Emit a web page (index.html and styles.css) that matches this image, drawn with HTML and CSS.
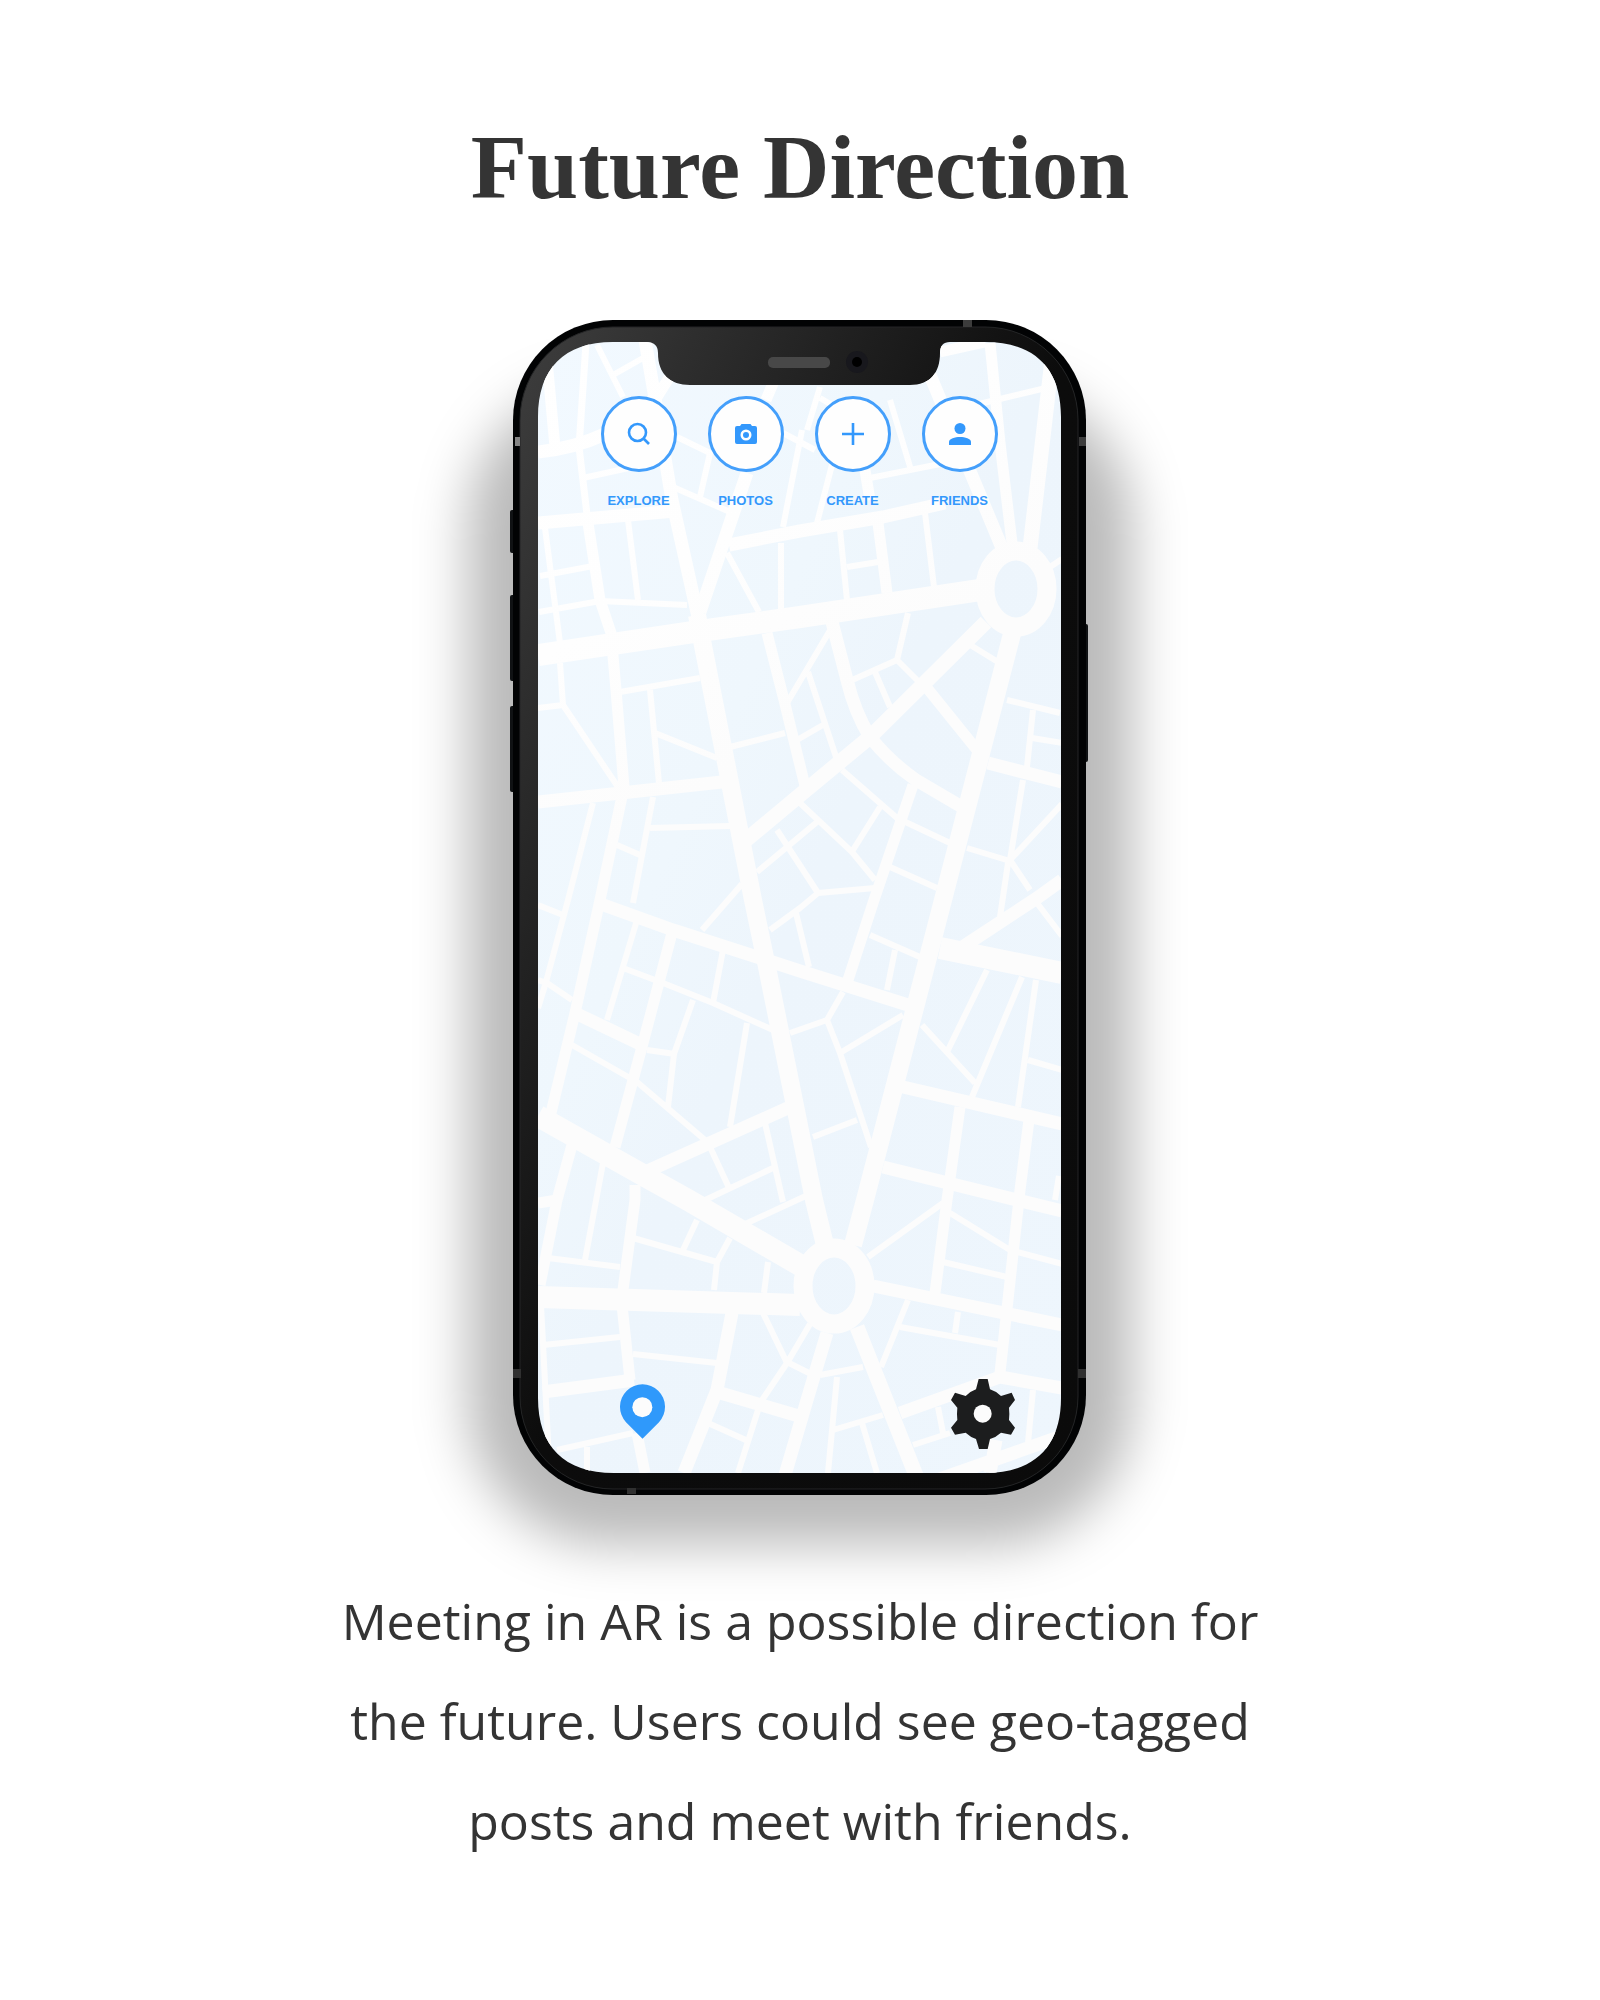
FILE: index.html
```html
<!DOCTYPE html>
<html lang="en">
<head>
<meta charset="utf-8">
<meta name="viewport" content="width=device-width, initial-scale=1">
<title>Future Direction</title>
<link rel="stylesheet" href="styles.css">
</head>
<body>
<main class="page">
  <h1 class="title">Future Direction</h1>

  <section class="phone" aria-label="App preview">
    <svg class="phone-art" viewBox="500 310 600 1200" aria-hidden="true">
      <defs>
        <linearGradient id="bezel" x1="0" y1="0" x2="1" y2="1">
          <stop offset="0" stop-color="#3e3e3e"/>
          <stop offset=".28" stop-color="#222"/>
          <stop offset=".5" stop-color="#0c0c0c"/>
          <stop offset="1" stop-color="#0b0b0b"/>
        </linearGradient>
        <linearGradient id="land" x1="0" y1="0" x2="1" y2="1">
          <stop offset="0" stop-color="#f2f9ff"/>
          <stop offset=".35" stop-color="#eff7fd"/>
          <stop offset=".5" stop-color="#edf5fc"/>
          <stop offset="1" stop-color="#eef6fd"/>
        </linearGradient>
        <linearGradient id="road" gradientUnits="userSpaceOnUse" x1="538" y1="342" x2="900" y2="900">
          <stop offset="0" stop-color="#ffffff"/>
          <stop offset=".4" stop-color="#fefefe"/>
          <stop offset=".7" stop-color="#fcfcfc"/>
        </linearGradient>
        <filter id="soft" x="-40%" y="-20%" width="180%" height="140%">
          <feGaussianBlur stdDeviation="26"/>
        </filter>
        <path id="glass" d="M613 342H646Q658 342 658 353C658 374 670 385 690 385H910C930 385 940 373 940 353Q940 342 950 342H985C1035 342 1061 369 1061 417V1398C1061 1446 1035 1473 985 1473H614C564 1473 538 1446 538 1398V417C538 369 564 342 613 342Z"/>
        <clipPath id="screen"><use href="#glass"/></clipPath>
      </defs>

      <rect x="468" y="385" width="664" height="1160" rx="140" fill="#000" fill-opacity=".27" filter="url(#soft)"/>

      <g fill="#101214">
        <rect x="510" y="510" width="8" height="43" rx="2"/>
        <rect x="510" y="595" width="8" height="86" rx="2"/>
        <rect x="510" y="706" width="8" height="86" rx="2"/>
        <rect x="1081" y="624" width="7" height="138" rx="2"/>
      </g>
      <rect x="513" y="320" width="573" height="1175" rx="100" fill="#020304"/>
      <rect x="520" y="327" width="558" height="1162" rx="93" fill="url(#bezel)" stroke="#242526"/>
      <g fill="#3c3c3c">
        <rect x="515" y="437" width="5" height="9" fill="#858585"/>
        <rect x="1079" y="437" width="7" height="9"/>
        <rect x="963" y="320" width="9" height="7"/>
        <rect x="513" y="1369" width="8" height="9" fill="#303030"/>
        <rect x="1078" y="1369" width="8" height="9" fill="#303030"/>
        <rect x="627" y="1488" width="9" height="6" fill="#303030"/>
      </g>

      <use href="#glass" fill="url(#land)"/>
      <g clip-path="url(#screen)" fill="none" stroke="url(#road)" stroke-linejoin="round">
        <!-- lanes -->
        <g stroke-width="6">
          <path d="M597 345L623 397M613 375L643 358M583 478L633 467M677 437L710 453L700 497M673 487L730 512M783 433L815 450M802 430L783 527M781 543L781 612M727 553L759 612M540 576L593 566M628 520L638 600M539 612L600 601L687 605M545 528L560 643"/>
          <path d="M820 387L807 430M820 398L837 408M834 457L817 523M890 400L911 470M870 478L945 463M975 405L1050 387M840 530L847 600M847 567L878 562M925 513L934 587M1050 567L1062 559"/>
          <path d="M560 663L563 705L618 787M538 708L563 705M620 692L700 678M650 690L659 783M655 733L717 758M730 747L785 733M787 703L832 627M797 740L823 725M808 672L837 760M593 803L568 900L546 982L538 1008M653 797L633 903M617 845L640 855M650 828L730 826M757 872L817 822M777 830L788 847L818 893M742 884L702 930"/>
          <path d="M908 613L897 660L920 683M850 681L897 660M875 672L890 707M967 643L998 662M1007 700L1060 713M1033 710L1027 767M1032 738L1062 743M842 770L897 818L950 843M880 807L853 850M800 803L852 852L875 880M890 867L937 888M770 930L800 908L818 893L875 888M967 848L1010 861M1023 780L1010 860L1062 804M1010 860L1030 890M1008 863L1000 917"/>
          <path d="M796 913L809 967M870 935L920 957M895 950L887 990M843 992L827 1020L790 1033M827 1020L840 1053L871 1147M840 1053L903 1015M813 1137L857 1120M922 1025L975 1083M987 970L947 1052M1022 977L972 1097M1036 980L1018 1107M1028 1060L1062 1070M1037 903L1062 936M1059 1176L1055 1200"/>
          <path d="M538 905L563 915M538 980L547 983L572 1000M637 920L607 1020M623 968L663 983L713 1003L773 1030M693 1000L674 1054L668 1107M647 1050L675 1054M723 950L713 1003M747 1023L730 1127M572 1045L637 1082L705 1140M710 1147L730 1190M703 1201L773 1168M765 1123L783 1202M743 1225L810 1194M603 1163L585 1260"/>
          <path d="M548 1258L620 1267M633 1238L717 1262L714 1290M697 1220L683 1250M730 1238L717 1262M768 1262L764 1293M543 1345L620 1337M633 1354L717 1363M763 1313L787 1363L760 1403M787 1362L817 1377M810 1324L787 1363M758 1410L738 1473M708 1423L748 1441M557 1450L633 1433M587 1447V1473"/>
          <path d="M868 1257L943 1203M950 1213L1010 1250L1062 1264M943 1262L1007 1277M908 1300L881 1367M900 1327L1000 1345M958 1312L955 1333M820 1375L863 1367M837 1377L828 1473M833 1430L883 1415M862 1423L877 1473M913 1445L950 1433M938 1407L943 1433M1033 1390L1028 1443"/>
        </g>
        <!-- streets -->
        <g stroke-width="11">
          <path d="M586 343L579 447L588 523" stroke-width="7"/>
          <path d="M547 360L555 447M588 523L600 600L611 633L616 690L624 787L600 900L575 1013L551 1113M657 397L677 365M865 470L870 500M878 523L887 593M990 343L1000 443L1012 543M767 633L784 700L806 790M630 1380L622 1305M637 1433L645 1473"/>
          <path d="M672 933L643 1043L615 1147M635 1185L635 1200L623 1290M572 1145L557 1200L540 1285M960 1107L947 1200L935 1293M1029 1120L1020 1190L1000 1373M923 683L977 750M913 785L874 900L848 980"/>
          <path d="M541 1305L549 1460" stroke-width="6"/>
          <path d="M538 1203L557 1200M779 369L766 400M940 352L985 342"/>
        </g>
        <g stroke-width="13">
          <path d="M538 452Q575 448 605 434M538 523L675 511M700 612L747 473M729 545L800 531L883 517L945 503M538 802L722 782M832 622L847 680Q855 713 870 737Q890 762 916 780L962 807M988 763L1062 782M598 903L673 930L757 957L800 971L908 1005M575 1013L642 1045M643 1173L790 1107M903 1087L1062 1124M883 1167L1062 1211M873 1286L1062 1325M961 948L1037 898L1062 880"/>
          <path d="M827 1333L807 1400L785 1475M717 1392L802 1417M732 1313L717 1390L684 1473M543 1392L634 1380M900 1413L1000 1377L1062 1388M940 1479L1062 1436M996 1440L990 1473"/>
        </g>
        <!-- avenues -->
        <path stroke-width="13" d="M645 340L657 410L672 500L702 635M930 375L1002 548"/>
        <path stroke-width="15" d="M1052 360L1030 548M986 622L870 737L800 795L746 840M857 1327L917 1478"/>
        <path stroke-width="18" d="M697 615L753 900L767 967L814 1200L825 1245M1013 630L943 900L917 1000L865 1200L853 1245"/>
        <path stroke-width="22" d="M538 655L700 631L800 617L980 590M538 1297L800 1305M538 1116L643 1175L688 1200L805 1268M940 948L1062 973"/>
        <!-- roundabouts -->
        <ellipse cx="1016" cy="589" rx="31" ry="38" stroke-width="19"/>
        <ellipse cx="834" cy="1286" rx="31" ry="38" stroke-width="19"/>
      </g>

      <rect x="768" y="357" width="62" height="11" rx="5" fill="#484848"/>
      <circle cx="857" cy="362" r="11" fill="#18181d"/>
      <circle cx="857" cy="362" r="5" fill="#000"/>
    </svg>

    <div class="app">
      <nav class="actions" aria-label="Main">
        <button class="action" type="button">
          <span class="disc"><svg viewBox="0 0 24 24" class="glyph"><g fill="none" stroke="currentColor" stroke-width="2.600"><circle cx="10.500" cy="10.500" r="8.500"/><path d="M16 16L22 22"/></g></svg></span>
          <span class="label">EXPLORE</span>
        </button>
        <button class="action" type="button">
          <span class="disc"><svg viewBox="0 0 24 24" class="glyph"><path fill="currentColor" fill-rule="evenodd" d="M3 4H6L7.500 2H16.500L18 4H21Q23 4 23 6V20Q23 22 21 22H3Q1 22 1 20V6Q1 4 3 4ZM12 7.500A5.500 5.500 0 1 0 12 18.500A5.500 5.500 0 1 0 12 7.500Z"/><circle cx="12" cy="13" r="3" fill="currentColor"/></svg></span>
          <span class="label">PHOTOS</span>
        </button>
        <button class="action" type="button">
          <span class="disc"><svg viewBox="0 0 24 24" class="glyph"><path fill="none" stroke="currentColor" stroke-width="2.600" d="M12 1V23M1 12H23"/></svg></span>
          <span class="label">CREATE</span>
        </button>
        <button class="action" type="button">
          <span class="disc"><svg viewBox="0 0 24 24" class="glyph"><circle cx="12" cy="6.500" r="5.500" fill="currentColor"/><path fill="currentColor" d="M1 23V20C1 16.500 7 15 12 15S23 16.500 23 20V23Z"/></svg></span>
          <span class="label">FRIENDS</span>
        </button>
      </nav>

      <div class="tools">
        <button class="tool tool-locate" type="button" aria-label="My location">
          <svg class="pin" viewBox="0 0 135 164"><path fill="#2f99fb" d="M67.500 164L18 114A67.500 67.500 0 1 1 117 114Z"/><circle cx="67" cy="69" r="30" fill="#fcfcfc"/></svg>
        </button>
        <button class="tool" type="button" aria-label="Settings">
          <svg class="gear" viewBox="0 0 192 210"><path fill="#1c1d1e" d="M83 0H110L117 31Q136 37 150 51L182 41L192 63L174 86Q176 104 174 123L192 146L180 167L150 161Q136 174 117 180L110 210H84L75 180Q58 174 44 161L12 167L0 146L19 123Q17 104 19 86L0 63L12 41L44 51Q58 37 75 31Z"/><circle cx="95" cy="104" r="27" fill="#fcfcfc"/></svg>
        </button>
      </div>
    </div>
  </section>

  <p class="summary">Meeting in AR is a possible direction for the future. Users could see geo-tagged posts and meet with friends.</p>
</main>
</body>
</html>
```
FILE: styles.css
```css
* {
  box-sizing: border-box;
}

body {
  margin: 0;
  background: #fff;
  color: #343434;
}

.page {
  display: flex;
  flex-direction: column;
  align-items: center;
  min-height: 100vh;
  padding: 117px 24px 96px;
}

.title {
  margin: 0 0 93px;
  font: bold 92px/100px "Liberation Serif", serif;
  text-align: center;
}

.phone {
  display: grid;
  width: 600px;
}

.phone-art,
.app {
  grid-area: 1 / 1;
}

.phone-art {
  display: block;
  width: 100%;
  overflow: visible;
}

.app {
  position: relative;
  display: flex;
  flex-direction: column;
  justify-content: space-between;
  padding: 86px 85px 61px 101px;
}

button {
  padding: 0;
  border: 0;
  background: none;
  cursor: pointer;
}

.actions {
  display: flex;
  gap: 32px;
}

.action {
  display: flex;
  flex-direction: column;
  align-items: center;
  gap: 21px;
  width: 75px;
  color: #3398fc;
}

.disc {
  display: grid;
  place-items: center;
  width: 76px;
  height: 76px;
  border: 3px solid #449ffb;
  border-radius: 50%;
  background: #fefefe;
}

.glyph {
  width: 24px;
  height: 24px;
}

.label {
  font: bold 13px/16px "Liberation Sans", sans-serif;
}

.tools {
  display: flex;
  align-items: center;
  justify-content: space-between;
  padding-left: 19px;
}

.tool svg {
  display: block;
}

.tool-locate {
  padding-bottom: 5px;
}

.pin {
  width: 45px;
  height: 55px;
}

.gear {
  width: 64px;
  height: 70px;
}

.summary {
  max-width: 960px;
  margin: 61px 0 0;
  font: 50px/100px "Open Sans", sans-serif;
  text-align: center;
}
```
